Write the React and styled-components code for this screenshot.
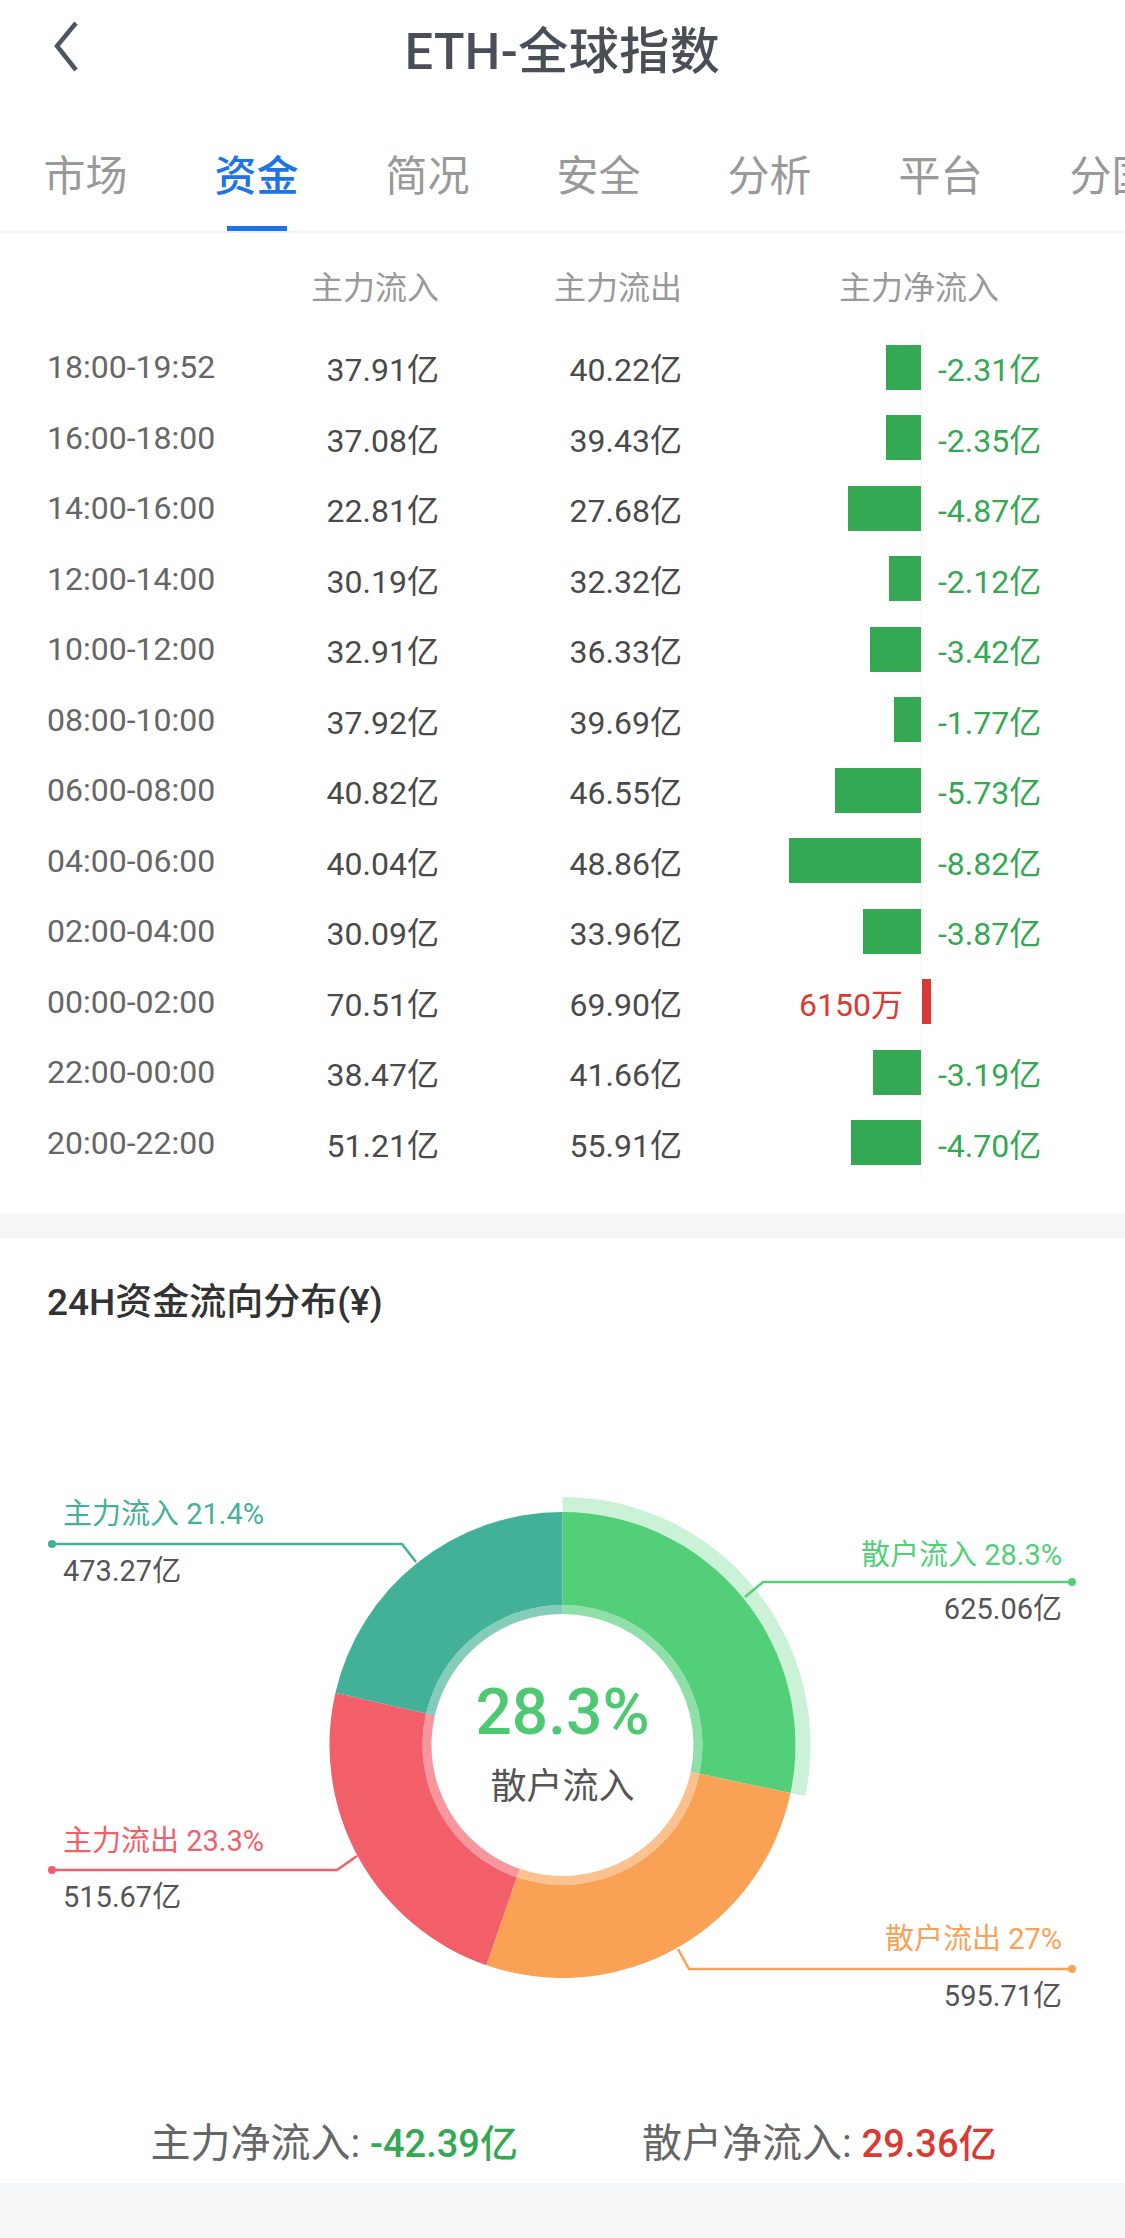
import React from 'react';
import styled, { createGlobalStyle } from 'styled-components';

const GlobalStyle = createGlobalStyle`
  html, body {
    margin: 0;
    padding: 0;
    background: #f5f6f8;
  }
  body {
    font-family: Roboto, "Noto Sans CJK SC", sans-serif;
    -webkit-font-smoothing: antialiased;
  }
  * { box-sizing: border-box; }
`;

const GREEN = '#34a853';
const RED = '#d93a33';

const Page = styled.div`
  width: 1125px;
  min-height: 2238px;
  background: #f5f6f8;
  overflow: hidden;
`;

const Header = styled.header`
  background: #fff;
`;

const NavBar = styled.div`
  position: relative;
  height: 94px;
  display: flex;
  align-items: center;
  justify-content: center;
`;

const BackButton = styled.div`
  position: absolute;
  left: 50px;
  top: 20px;
  width: 32px;
  height: 54px;
`;

const Title = styled.h1`
  margin: 0;
  font-size: 50px;
  font-weight: 500;
  color: #4a4f57;
  letter-spacing: 0.5px;
`;

const TabBar = styled.nav`
  display: flex;
  height: 139px;
  border-bottom: 2px solid #eef0f4;
  overflow: hidden;
`;

const Tab = styled.div`
  position: relative;
  flex: 0 0 171px;
  display: flex;
  justify-content: center;
  align-items: center;
  padding-top: 20px;
  font-size: 42px;
  color: ${p => (p.$active ? '#1d74e6' : '#999')};
  font-weight: ${p => (p.$active ? 500 : 400)};
`;

const Underline = styled.span`
  position: absolute;
  left: 50%;
  bottom: 0;
  width: 60px;
  height: 5px;
  margin-left: -30px;
  background: #1d74e6;
`;

const TableCard = styled.section`
  background: #fff;
  padding: 18px 0 35px;
`;

const Grid = styled.div`
  display: grid;
  grid-template-columns: 200px 192px 243px 240px 1fr;
  padding-left: 47px;
  align-items: stretch;
`;

const HeadRow = styled(Grid)`
  height: 68px;
  margin-bottom: 13px;
  font-size: 32px;
  color: #999;
  align-items: center;
`;

const HeadCell = styled.div`
  text-align: right;
`;

const NetHead = styled.div`
  grid-column: 4 / 6;
  padding-left: 157px;
`;

const Row = styled(Grid)`
  height: 70.5px;
  font-size: 32px;
`;

const Time = styled.div`
  display: flex;
  align-items: center;
  color: #666;
`;

const Amount = styled.div`
  display: flex;
  align-items: center;
  justify-content: flex-end;
  color: #4a4a4a;
`;

const NetLeft = styled.div`
  display: flex;
  align-items: center;
  justify-content: flex-end;
  border-right: 1px solid #f2f3f6;
`;

const NetRight = styled.div`
  display: flex;
  align-items: center;
`;

const Bar = styled.div`
  height: 45px;
  background: ${p => (p.$up ? RED : GREEN)};
`;

const NetValue = styled.span`
  color: ${p => (p.$up ? RED : GREEN)};
  margin: ${p => (p.$up ? '0 18px 0 0' : '0 0 0 16px')};
`;

const ChartCard = styled.section`
  margin-top: 25px;
  background: #fff;
  padding-top: 43px;
`;

const ChartTitle = styled.h2`
  margin: 0;
  padding-left: 47px;
  font-size: 37px;
  line-height: 44px;
  font-weight: 500;
  color: #333;
`;

const Canvas = styled.div`
  position: relative;
  height: 700px;
  margin-top: 15px;
`;

const Label = styled.div`
  position: absolute;
  top: ${p => p.$y}px;
  ${p => (p.$side === 'left' ? `left: 63px;` : `right: 63px;`)}
  transform: translateY(-50%);
  font-size: 29px;
  line-height: 36px;
  white-space: nowrap;
  color: ${p => p.$color || '#555'};
`;

const Center = styled.div`
  position: absolute;
  left: 0;
  right: 0;
  top: 333px;
  display: flex;
  flex-direction: column;
  align-items: center;
`;

const CenterPct = styled.div`
  font-size: 64px;
  line-height: 80px;
  font-weight: 500;
  color: #4fc874;
`;

const CenterName = styled.div`
  margin-top: 12px;
  font-size: 36px;
  line-height: 44px;
  color: #555;
`;

const Summary = styled.div`
  display: flex;
  justify-content: center;
  gap: 124px;
  padding: 82px 0 17px 22px;
  font-size: 40px;
  line-height: 44px;
  color: #666;
`;

const SumValue = styled.span`
  font-size: 38px;
  font-weight: 500;
  color: ${p => (p.$up ? RED : GREEN)};
`;

const tabs = ['市场', '资金', '简况', '安全', '分析', '平台', '分国'];

const rows = [
  ['18:00-19:52', '37.91亿', '40.22亿', -2.31, '-2.31亿'],
  ['16:00-18:00', '37.08亿', '39.43亿', -2.35, '-2.35亿'],
  ['14:00-16:00', '22.81亿', '27.68亿', -4.87, '-4.87亿'],
  ['12:00-14:00', '30.19亿', '32.32亿', -2.12, '-2.12亿'],
  ['10:00-12:00', '32.91亿', '36.33亿', -3.42, '-3.42亿'],
  ['08:00-10:00', '37.92亿', '39.69亿', -1.77, '-1.77亿'],
  ['06:00-08:00', '40.82亿', '46.55亿', -5.73, '-5.73亿'],
  ['04:00-06:00', '40.04亿', '48.86亿', -8.82, '-8.82亿'],
  ['02:00-04:00', '30.09亿', '33.96亿', -3.87, '-3.87亿'],
  ['00:00-02:00', '70.51亿', '69.90亿', 0.615, '6150万'],
  ['22:00-00:00', '38.47亿', '41.66亿', -3.19, '-3.19亿'],
  ['20:00-22:00', '51.21亿', '55.91亿', -4.7, '-4.70亿'],
];

const slices = [
  { name: '散户流入', pct: 28.3, color: '#53cf7a' },
  { name: '散户流出', pct: 27, color: '#f9a155' },
  { name: '主力流出', pct: 23.3, color: '#f25f69' },
  { name: '主力流入', pct: 21.4, color: '#43b197' },
];

const CX = 562.5;
const CY = 405;

const pt = (r, a) => {
  const rad = (a * Math.PI) / 180;
  return [CX + r * Math.sin(rad), CY - r * Math.cos(rad)];
};

const sector = (r0, r1, a0, a1) => {
  const large = a1 - a0 > 180 ? 1 : 0;
  const [x1, y1] = pt(r1, a0);
  const [x2, y2] = pt(r1, a1);
  const [x3, y3] = pt(r0, a1);
  const [x4, y4] = pt(r0, a0);
  return `M${x1} ${y1} A${r1} ${r1} 0 ${large} 1 ${x2} ${y2} L${x3} ${y3} A${r0} ${r0} 0 ${large} 0 ${x4} ${y4} Z`;
};

const Donut = () => {
  let start = 0;
  const parts = slices.map(s => {
    const a0 = start;
    const a1 = start + (s.pct / 100) * 360;
    start = a1;
    return { ...s, a0, a1 };
  });
  const leaders = [
    { color: '#43b197', pts: '52,204 402,204 416,222', dot: [52, 204] },
    { color: '#53cf7a', pts: '745,257 763,242 1072,242', dot: [1072, 242] },
    { color: '#f25f69', pts: '52,530 337,530 357,516', dot: [52, 530] },
    { color: '#f9a155', pts: '678,609 689,629 1072,629', dot: [1072, 629] },
  ];
  return (
    <svg width="1125" height="700" viewBox="0 0 1125 700" style={{ display: 'block' }}>
      {parts.map(p => (
        <path key={p.name} d={sector(140, 233, p.a0, p.a1)} fill={p.color} />
      ))}
      {parts.map(p => (
        <path key={p.name + 'i'} d={sector(131, 140, p.a0, p.a1)} fill={p.color} opacity="0.65" />
      ))}
      <path d={sector(233, 248, parts[0].a0, parts[0].a1)} fill={parts[0].color} opacity="0.3" />
      {leaders.map(l => (
        <g key={l.pts}>
          <polyline points={l.pts} fill="none" stroke={l.color} strokeWidth="2.5" />
          <circle cx={l.dot[0]} cy={l.dot[1]} r="4" fill={l.color} />
        </g>
      ))}
    </svg>
  );
};

export default function App() {
  return (
    <Page>
      <GlobalStyle />
      <Header>
        <NavBar>
          <BackButton>
            <svg width="32" height="54" viewBox="0 0 32 54">
              <polyline points="26,3 7,26 26,50" fill="none" stroke="#4f5660" strokeWidth="4.5" />
            </svg>
          </BackButton>
          <Title>ETH-全球指数</Title>
        </NavBar>
        <TabBar>
          {tabs.map((t, i) => (
            <Tab key={t} $active={i === 1}>
              {t}
              {i === 1 && <Underline />}
            </Tab>
          ))}
        </TabBar>
      </Header>

      <TableCard>
        <HeadRow>
          <div />
          <HeadCell>主力流入</HeadCell>
          <HeadCell>主力流出</HeadCell>
          <NetHead>主力净流入</NetHead>
        </HeadRow>
        {rows.map(([time, inflow, outflow, net, label]) => {
          const up = net > 0;
          const bar = <Bar $up={up} style={{ width: Math.abs(net) * 15 }} />;
          return (
            <Row key={time}>
              <Time>{time}</Time>
              <Amount>{inflow}</Amount>
              <Amount>{outflow}</Amount>
              <NetLeft>{up ? <NetValue $up>{label}</NetValue> : bar}</NetLeft>
              <NetRight>{up ? bar : <NetValue>{label}</NetValue>}</NetRight>
            </Row>
          );
        })}
      </TableCard>

      <ChartCard>
        <ChartTitle>24H资金流向分布(¥)</ChartTitle>
        <Canvas>
          <Donut />
          <Label $side="left" $y={174} $color="#43b197">主力流入 21.4%</Label>
          <Label $side="left" $y={231}>473.27亿</Label>
          <Label $side="right" $y={215} $color="#53cf7a">散户流入 28.3%</Label>
          <Label $side="right" $y={269}>625.06亿</Label>
          <Label $side="left" $y={501} $color="#f25f69">主力流出 23.3%</Label>
          <Label $side="left" $y={557}>515.67亿</Label>
          <Label $side="right" $y={599} $color="#f9a155">散户流出 27%</Label>
          <Label $side="right" $y={656}>595.71亿</Label>
          <Center>
            <CenterPct>28.3%</CenterPct>
            <CenterName>散户流入</CenterName>
          </Center>
        </Canvas>
        <Summary>
          <span>
            主力净流入: <SumValue>-42.39亿</SumValue>
          </span>
          <span>
            散户净流入: <SumValue $up>29.36亿</SumValue>
          </span>
        </Summary>
      </ChartCard>
    </Page>
  );
}
